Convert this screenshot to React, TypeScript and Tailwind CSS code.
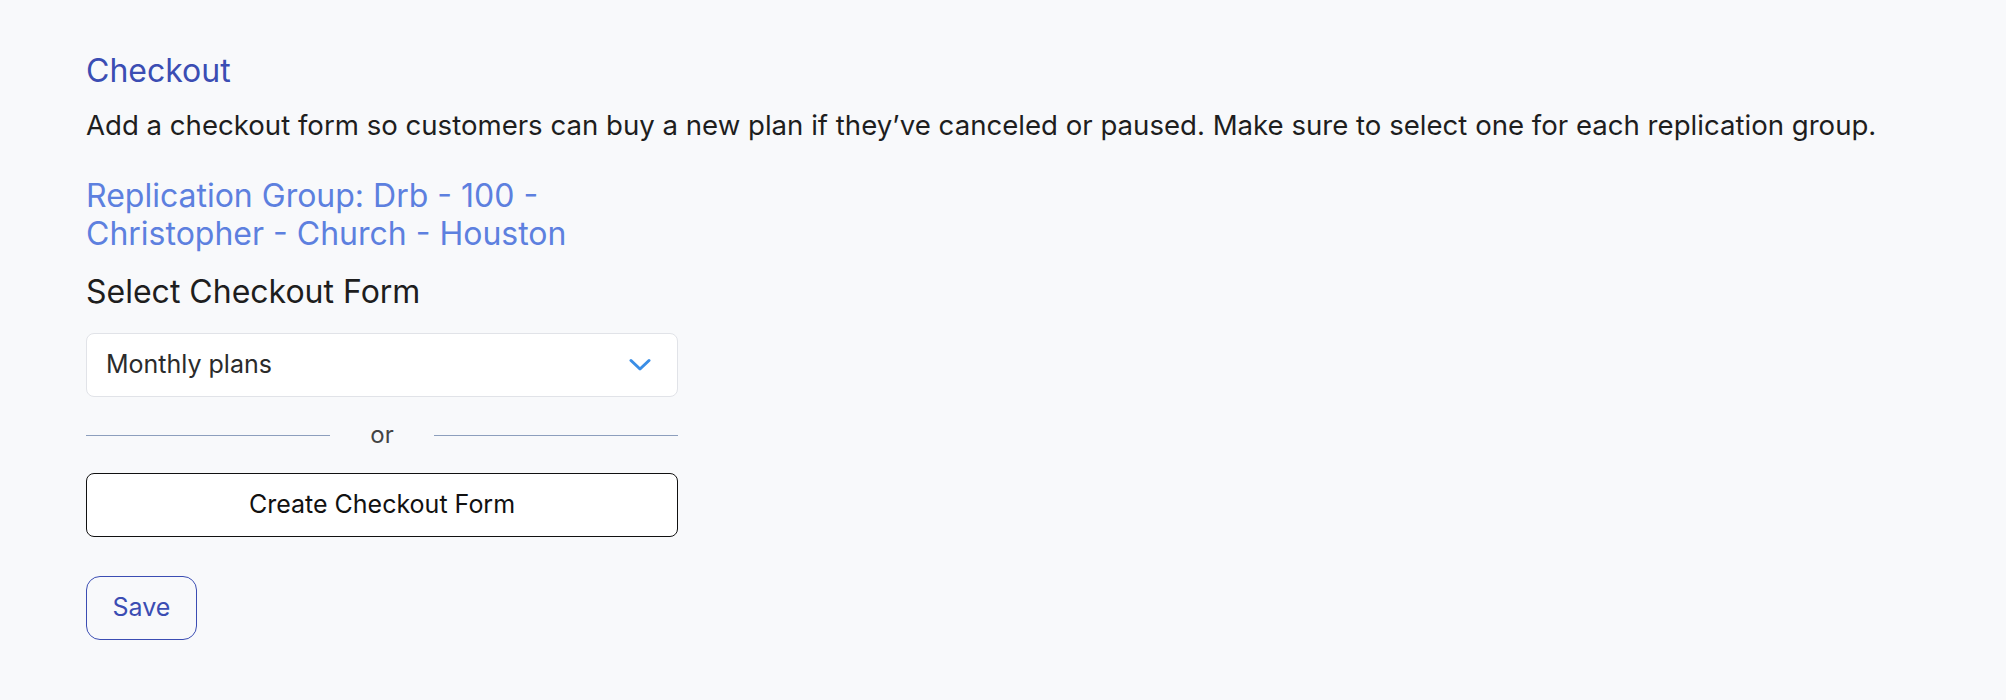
import React from 'react';

const App: React.FC = () => {
  return (
    <div className="min-h-[700px] bg-[#f8f9fb] px-[86px] pt-[52px] font-['Inter',sans-serif]">
      {/* Header */}
      <h2 className="text-[32px] leading-[38px] text-[#3b4db3]">Checkout</h2>
      <p className="mt-[16px] text-[27.6px] leading-[38px] text-[#1e1e1e]">
        Add a checkout form so customers can buy a new plan if they’ve canceled or paused. Make sure to select one for each replication group.
      </p>

      {/* Replication group */}
      <div className="mt-[33px] w-[510px] text-[32px] leading-[38px] text-[#5d80df]">
        Replication Group: Drb - 100 - Christopher - Church - Houston
      </div>

      <div className="mt-[20px] text-[32px] leading-[38px] text-[#1e1e1e]">Select Checkout Form</div>

      <div className="mt-[22px] flex w-[592px] flex-col">
        {/* Select */}
        <div className="flex h-[64px] items-center justify-between rounded-[8px] border border-[#e1e3e8] bg-white pl-[19px] pr-[26px]">
          <span className="text-[25px] text-[#2b2b2b]">Monthly plans</span>
          <svg width="22" height="14" viewBox="0 0 22 14" fill="none">
            <path d="M2 2.5 L11 11 L20 2.5" stroke="#3a8ee6" strokeWidth="3" strokeLinecap="round" strokeLinejoin="round" />
          </svg>
        </div>

        {/* Divider */}
        <div className="mt-[14px] flex h-[48px] items-center gap-[40px]">
          <div className="h-px flex-1 bg-[#8d9fbd]" />
          <span className="text-[24px] text-[#444]">or</span>
          <div className="h-px flex-1 bg-[#8d9fbd]" />
        </div>

        <button className="mt-[14px] h-[64px] w-full rounded-[8px] border border-[#111] bg-white text-[25px] text-[#111]">
          Create Checkout Form
        </button>
      </div>

      <button className="mt-[39px] h-[64px] w-[111px] rounded-[14px] border border-[#3b4db3] text-[25px] text-[#3b4db3]">
        Save
      </button>
    </div>
  );
};

export default App;
